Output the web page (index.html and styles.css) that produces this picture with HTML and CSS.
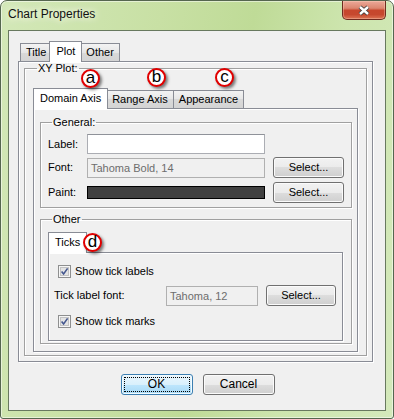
FILE: index.html
```html
<!DOCTYPE html>
<html lang="en">
<head>
	<meta charset="UTF-8">
	<title>Chart Properties</title>
<link rel="stylesheet" href="styles.css">
</head>
<body>
	<div class="window">
		<div class="titlebar">
			<span class="title">Chart Properties</span>
			<span class="close">
				<svg width="12" height="11" viewBox="0 0 12 11">
					<path d="M2 2 L10 9 M10 2 L2 9" stroke="#3b3b3b" stroke-width="4.2" fill="none"/>
					<path d="M2 2 L10 9 M10 2 L2 9" stroke="#fff" stroke-width="2.4" fill="none"/>
				</svg>
			</span>
		</div>
		<div class="client">
			<div class="tabbed top">
				<div class="tabrow">
					<span class="tab">Title</span>
					<span class="tab on">Plot</span>
					<span class="tab">Other</span>
				</div>
				<div class="pane outer">
					<fieldset class="group xy">
						<legend>XY Plot:</legend>
						<div class="tabrow">
							<span class="tab on">Domain Axis</span>
							<span class="tab">Range Axis</span>
							<span class="tab">Appearance</span>
						</div>
						<div class="pane domain">
							<fieldset class="group general">
								<legend>General:</legend>
								<div class="form">
									<span class="lbl">Label:</span>
									<span class="field"></span>
									<span></span>

									<span class="lbl">Font:</span>
									<span class="field off">Tahoma Bold, 14</span>
									<span class="btn">Select...</span>

									<span class="lbl">Paint:</span>
									<span class="paint"></span>
									<span class="btn">Select...</span>
								</div>
							</fieldset>
							<fieldset class="group other">
								<legend>Other</legend>
								<div class="tabrow">
									<span class="tab on">Ticks</span>
								</div>
								<div class="pane ticks">
									<div class="check">
										<svg width="13" height="13" viewBox="0 0 13 13">
											<rect x="0.5" y="0.5" width="12" height="12" fill="#f6f6f6" stroke="#8e8f8f"/>
											<rect x="2.5" y="2.5" width="8" height="8" fill="#e4e4e4" stroke="#c3c3c3"/>
											<path d="M3.6 6.4 L5.6 9 L9.6 3.4" fill="none" stroke="#44578f" stroke-width="1.6"/>
										</svg>
										<span>Show tick labels</span>
									</div>
									<div class="fontrow">
										<span class="lbl wide">Tick label font:</span>
										<span class="field off small">Tahoma, 12</span>
										<span class="btn">Select...</span>
									</div>
									<div class="check">
										<svg width="13" height="13" viewBox="0 0 13 13">
											<rect x="0.5" y="0.5" width="12" height="12" fill="#f6f6f6" stroke="#8e8f8f"/>
											<rect x="2.5" y="2.5" width="8" height="8" fill="#e4e4e4" stroke="#c3c3c3"/>
											<path d="M3.6 6.4 L5.6 9 L9.6 3.4" fill="none" stroke="#44578f" stroke-width="1.6"/>
										</svg>
										<span>Show tick marks</span>
									</div>
								</div>
							</fieldset>
						</div>
					</fieldset>
				</div>
			</div>
			<div class="actions">
				<span class="btn big default"><span class="focus">OK</span></span>
				<span class="btn big">Cancel</span>
			</div>
		</div>

		<span class="mark mark-a">a</span>
		<span class="mark mark-b">b</span>
		<span class="mark mark-c">c</span>
		<span class="mark mark-d">d</span>
	</div>
</body>
</html>
```

FILE: styles.css
```css
*{
	margin: 0;
	padding: 0;
	box-sizing: border-box;
}
body{
	width: 394px;
	height: 419px;
	font-family: "Liberation Sans", Arial, sans-serif;
	font-size: 11px;
	color: #000;
	background: #fff;
}
.window{
	position: relative;
	width: 394px;
	height: 419px;
	display: flex;
	flex-direction: column;
	border: 1px solid #55664f;
	border-radius: 7px 7px 3px 3px;
	background: linear-gradient(100deg, #d3e8b8 0%, #c8e0a4 35%, #bfdb97 55%, #cde5ae 75%, #d4e9bb 100%);
	box-shadow: inset 0 0 0 1px rgba(255,255,255,0.5);
}
.titlebar{
	height: 29px;
	display: flex;
	justify-content: space-between;
	align-items: flex-start;
	padding-left: 7px;
}
.title{
	font-size: 12px;
	line-height: 26px;
	color: #111;
	text-shadow: 0 0 6px #f4fae8, 0 0 10px #f4fae8;
}
.close{
	width: 44px;
	height: 19px;
	margin-right: 7px;
	display: flex;
	align-items: center;
	justify-content: center;
	border: 1px solid #6e2b1f;
	border-top: none;
	border-radius: 0 0 5px 5px;
	background: linear-gradient(#eca999 0%, #dc8670 40%, #c7472d 52%, #c6482e 75%, #dd7354 100%);
	box-shadow: inset 0 0 0 1px rgba(255,220,200,0.35);
}
.client{
	flex: 1;
	margin: 0 7px 7px 7px;
	border: 1px solid #68795f;
	background: #f0f0f0;
	display: flex;
	flex-direction: column;
}

/* tabs */
.tabrow{
	display: flex;
	align-items: flex-end;
	padding-left: 2px;
	position: relative;
	z-index: 1;
}
.tab{
	height: 18px;
	line-height: 17px;
	padding: 0 5px;
	border: 1px solid #898c95;
	border-bottom: none;
	margin-right: -1px;
	background: linear-gradient(#f3f3f3, #e6e6e6 50%, #d9d9d9 50%, #d4d4d4);
}
.tab.on{
	height: 21px;
	line-height: 18px;
	margin: 0 -2px -1px -2px;
	padding: 0 6px;
	background: #fff;
	position: relative;
	z-index: 2;
}
.tab.on + .tab{
	margin-left: 0;
}
.pane{
	border: 1px solid #898c95;
	box-shadow: inset 1px 1px 0 #fff, 1px 1px 0 #fff;
}
.top{
	margin: 10px 12px 0 9px;
}
.outer{
	padding: 0 5px 5px 5px;
}
.domain{
	padding: 7px 5px 7px 6px;
}
.ticks{
	padding: 7px 0 8px 0;
}

/* groups */
.group{
	border: 1px solid #a0a0a0;
	box-shadow: inset 1px 1px 0 #fff, 1px 1px 0 #fff;
	min-width: 0;
}
.group legend{
	margin-left: 4px;
	padding: 0 1px;
	line-height: 13px;
}
.xy{
	padding: 13px 8px 3px 8px;
}
.general{
	padding: 5px 0 5px 7px;
}
.other{
	margin-top: 5px;
	padding: 6px 8px 2px 7px;
}

/* form rows */
.form{
	display: grid;
	grid-template-columns: 31px 178px 71px;
	grid-template-rows: 20px 21px 21px;
	column-gap: 8px;
	row-gap: 3px;
	align-items: center;
}
.form > :nth-child(n+7){
	margin-top: 1px;
}
.lbl{
	line-height: 13px;
}
.field{
	height: 20px;
	line-height: 18px;
	padding: 0 3px;
	border: 1px solid #abadb3;
	border-top-color: #8f9299;
	background: #fff;
}
.field.off{
	background: #f0f0f0;
	border-color: #b0b0b0;
	color: #6d6d6d;
}
.paint{
	height: 13px;
	border: 1px solid #000;
	background: #404040;
}
.btn{
	height: 21px;
	line-height: 19px;
	text-align: center;
	border: 1px solid #707070;
	border-radius: 3px;
	background: linear-gradient(#f2f2f2 0%, #ebebeb 50%, #dddddd 50%, #cfcfcf 100%);
	box-shadow: inset 0 0 0 1px #fbfbfb;
}

.check{
	height: 22px;
	display: flex;
	align-items: center;
	gap: 4px;
	padding-left: 9px;
}
.check svg{
	margin-top: 1px;
}
.check + .fontrow{
	margin-top: 3px;
}
.fontrow{
	height: 21px;
	display: flex;
	align-items: center;
	padding-left: 5px;
	margin-bottom: 4px;
}
.lbl.wide{
	width: 112px;
}
.field.small{
	width: 92px;
	margin-right: 8px;
}
.fontrow .btn{
	width: 70px;
}

/* dialog buttons */
.actions{
	display: flex;
	justify-content: center;
	gap: 10px;
	margin-top: 12px;
	padding-left: 1px;
}
.btn.big{
	width: 72px;
	font-size: 12px;
}
.btn.default{
	border-color: #3c7fb1;
	background: linear-gradient(#eaf6fd 0%, #d9f0fc 50%, #bee6fd 50%, #a7d9f5 100%);
	box-shadow: inset 0 0 0 1px #f2fafe;
	padding: 2px;
	line-height: 15px;
}
.focus{
	display: block;
	height: 15px;
	border: 1px dotted #000;
	line-height: 13px;
}

/* annotation marks */
.mark{
	position: absolute;
	width: 19px;
	height: 19px;
	border: 2px solid #e10000;
	border-radius: 50%;
	background: #fff;
	font-size: 17px;
	line-height: 14px;
	text-align: center;
	color: #000;
	box-shadow: 2px 2px 3px rgba(0,0,0,0.5);
	z-index: 5;
}
.mark-a{left: 80px; top: 68px;}
.mark-b{left: 146px; top: 67px;}
.mark-c{left: 214px; top: 67px;}
.mark-d{left: 82px; top: 232px;}
```
